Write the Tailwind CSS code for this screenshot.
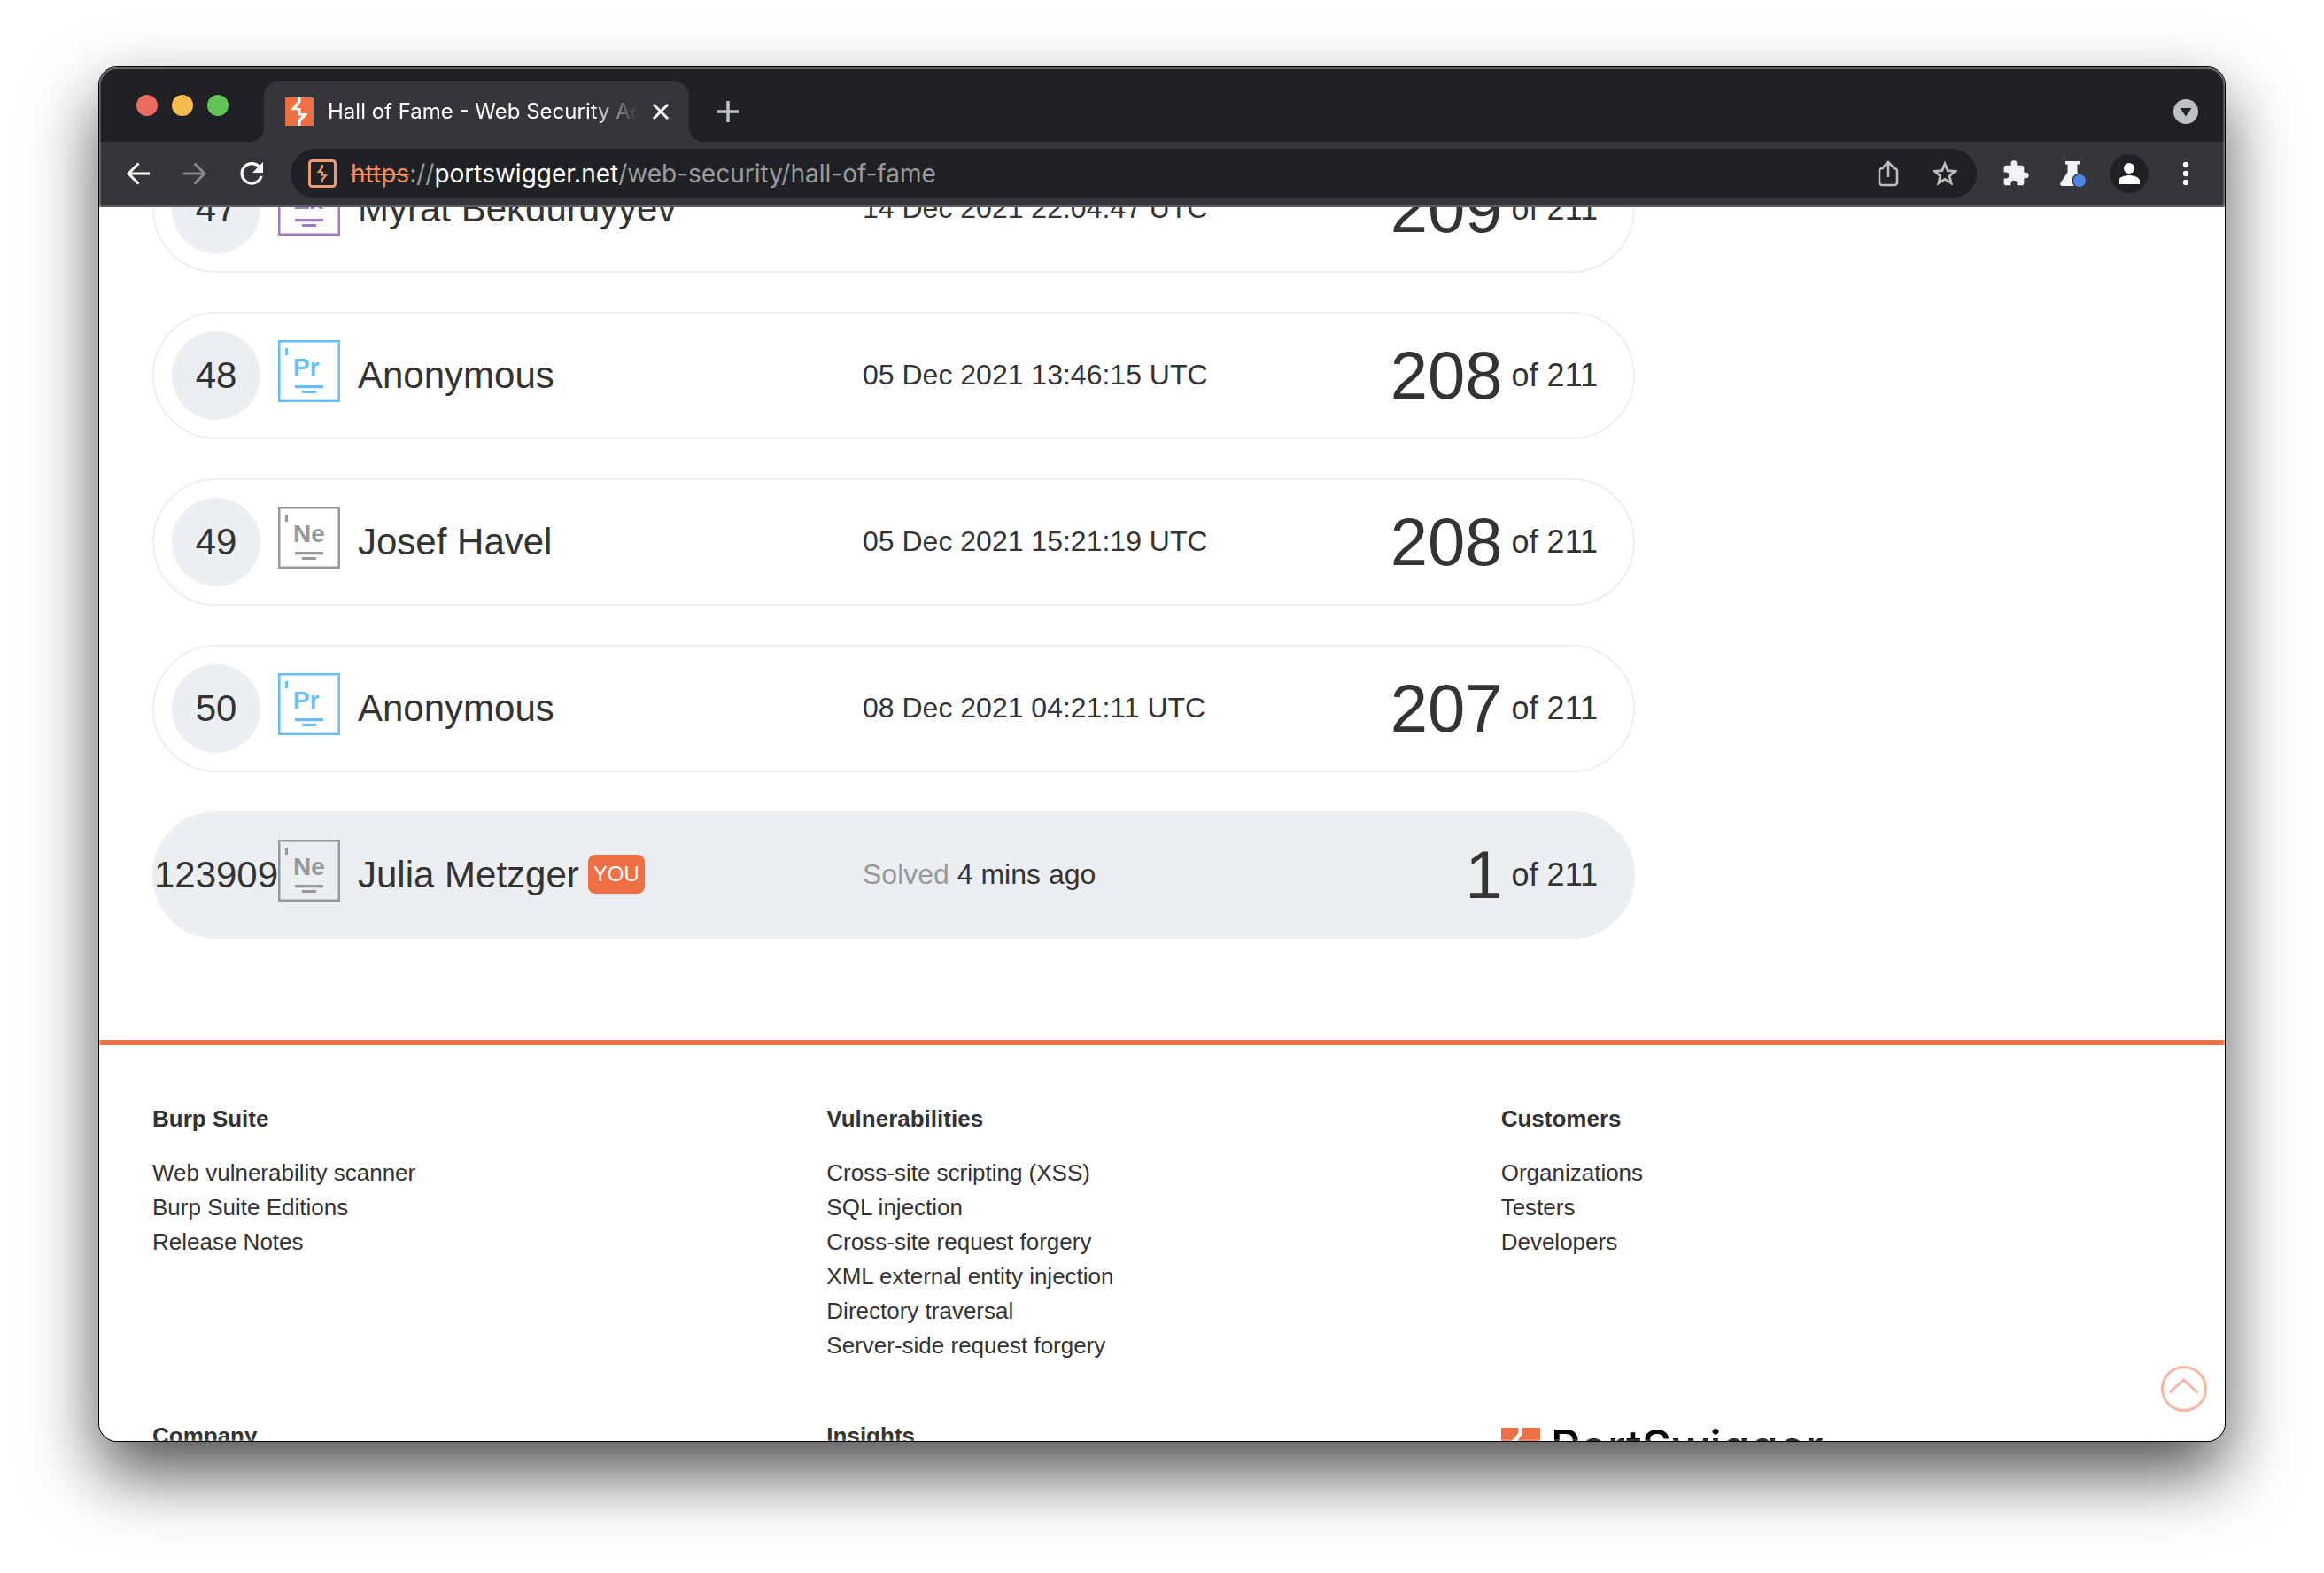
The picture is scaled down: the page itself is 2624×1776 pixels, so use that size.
<!DOCTYPE html>
<html lang="en">
<head>
<meta charset="utf-8">
<title>Hall of Fame - Web Security Academy</title>
<script src="https://cdn.jsdelivr.net/npm/@tailwindcss/browser@4"></script>
</head>
<body class="bg-white">
<svg class="hidden" aria-hidden="true">
  <symbol id="bolt" viewBox="0 0 32 32"><path d="M14 0h3.500v5L12.500 12h5v6h8.200l-8.200 9.500V32H14v-6l5-5.500h-5v-6.200H6l8-9.800z"/></symbol>
  <symbol id="badge-frame" viewBox="0 0 70 70">
    <rect x="1.250" y="1.250" width="67.500" height="67.500" fill="none" stroke="currentColor" stroke-width="2.500"/>
    <path d="M8 9h3v8H8zM19 51h32v3.200H19zM27 57h16v3H27z" fill="currentColor"/>
  </symbol>
</svg>

<div class="flex h-screen flex-col px-28 pt-19 pb-[149px] font-['Liberation_Sans',Arial,sans-serif] text-[#333332]">
  <div class="relative flex min-h-0 flex-1 flex-col overflow-hidden rounded-[20px] bg-white shadow-[0_0_0_1px_#000,0_36px_78px_rgba(0,0,0,0.69)]">

    <!-- Tab strip -->
    <header class="shrink-0 bg-[#202124] font-[Inter,Roboto,sans-serif]">
      <div class="flex h-21 items-end pr-[30px]">
        <div class="flex gap-4 self-center pt-0.5 pl-[42px]">
          <button type="button" aria-label="Close window" class="size-6 rounded-full bg-[#ed6a5f]"></button>
          <button type="button" aria-label="Minimise window" class="size-6 rounded-full bg-[#f5bd4f]"></button>
          <button type="button" aria-label="Zoom window" class="size-6 rounded-full bg-[#61c454]"></button>
        </div>
        <svg class="ml-6 size-4 fill-[#35363a]" viewBox="0 0 16 16" aria-hidden="true"><path d="M16 0v16H0A16 16 0 0 0 16 0z"/></svg>
        <div class="flex h-17 w-[480px] items-center rounded-t-2xl bg-[#35363a] pr-[18px] pl-6">
          <svg class="size-8 shrink-0 bg-[#ee6f43] fill-white" aria-hidden="true"><use href="#bolt"/></svg>
          <span class="ml-4 flex-1 overflow-hidden text-[24px] leading-8 whitespace-nowrap text-white [mask-image:linear-gradient(to_right,#000_85%,transparent)]">Hall of Fame - Web Security Academy</span>
          <button type="button" aria-label="Close tab" class="ml-3 shrink-0">
            <svg class="size-7" viewBox="0 0 28 28" fill="none" stroke="#fff" stroke-width="3"><path d="M6 6l16 16M22 6L6 22"/></svg>
          </button>
        </div>
        <svg class="size-4 fill-[#35363a]" viewBox="0 0 16 16" aria-hidden="true"><path d="M0 0v16h16A16 16 0 0 1 0 0z"/></svg>
        <button type="button" aria-label="New tab" class="mb-5 ml-3.5">
          <svg class="size-7" viewBox="0 0 28 28" fill="none" stroke="#bdc1c6" stroke-width="3.500"><path d="M14 2v24M2 14h24"/></svg>
        </button>
        <button type="button" aria-label="Search tabs" class="mb-5 ml-auto">
          <svg class="size-7" viewBox="0 0 28 28"><circle cx="14" cy="14" r="14" fill="#bdc1c6"/><path d="M7.500 10h13L14 19.500z" fill="#202124"/></svg>
        </button>
      </div>

      <!-- Toolbar -->
      <div class="flex h-[74px] items-center border-b-2 border-[#5c5d61] bg-[#35363a] pr-[30px] pl-7">
        <button type="button" aria-label="Back" class="shrink-0">
          <svg class="size-8" viewBox="0 0 32 32" fill="none" stroke="#fff" stroke-width="3"><path d="M16.500 4.500L5 16l11.500 11.500M5 16h24"/></svg>
        </button>
        <button type="button" aria-label="Forward" class="ml-8 shrink-0">
          <svg class="size-8" viewBox="0 0 32 32" fill="none" stroke="#87888a" stroke-width="3"><path d="M15.500 4.500L27 16 15.500 27.500M27 16H3"/></svg>
        </button>
        <button type="button" aria-label="Reload" class="ml-8 shrink-0">
          <svg class="size-8" viewBox="0 0 32 32"><path d="M25.500 9.500A11.200 11.200 0 1 0 27 19" fill="none" stroke="#fff" stroke-width="3.200"/><path d="M29 3v12H17z" fill="#fff"/></svg>
        </button>
        <div class="ml-7 flex h-14 flex-1 items-center rounded-full bg-[#202124] pr-5 pl-5">
          <svg class="size-8 shrink-0" viewBox="0 0 32 32" aria-hidden="true"><rect x="1.500" y="1.500" width="29" height="29" rx="3" fill="none" stroke="#f19a71" stroke-width="3"/><use href="#bolt" x="6" y="6" width="20" height="20" fill="#f19a71"/></svg>
          <div role="textbox" aria-label="Address" class="ml-4 flex-1 text-[28px] leading-8 whitespace-nowrap text-[#9a9b9d]"><span class="text-[#f08d63] line-through">https</span>://<span class="text-white">portswigger.net</span>/web-security/hall-of-fame</div>
          <button type="button" aria-label="Share">
            <svg class="size-8" viewBox="0 0 32 32" fill="none" stroke="#bdbdbd" stroke-width="2.600"><path d="M11 10H9a3 3 0 0 0-3 3v13a3 3 0 0 0 3 3h14a3 3 0 0 0 3-3V13a3 3 0 0 0-3-3h-2M16 20V4M10.500 8.500L16 3l5.500 5.500"/></svg>
          </button>
          <button type="button" aria-label="Bookmark this page" class="ml-8">
            <svg class="size-8" viewBox="0 0 32 32" fill="none" stroke="#bdbdbd" stroke-width="2.800"><path d="M16 5l3.200 7.600 8.200.7-6.200 5.400 1.900 8L16 22.400l-7.100 4.300 1.900-8-6.200-5.400 8.200-.7z"/></svg>
          </button>
        </div>
        <button type="button" aria-label="Extensions" class="ml-7">
          <svg class="size-8" viewBox="0 0 24 24" fill="#f1f3f4"><path d="M20.500 11H19V7c0-1.100-.9-2-2-2h-4V3.500a2.500 2.500 0 0 0-5 0V5H4c-1.100 0-2 .9-2 2v3.800h1.500a2.700 2.700 0 0 1 0 5.400H2V20c0 1.100.9 2 2 2h3.800v-1.500a2.700 2.700 0 0 1 5.400 0V22H17c1.100 0 2-.9 2-2v-4h1.500a2.500 2.500 0 0 0 0-5z"/></svg>
        </button>
        <button type="button" aria-label="Chrome Labs" class="ml-8">
          <svg class="size-8" viewBox="0 0 32 32"><path d="M8 2h16v3.500h-2.500v9L29 26.500c1 1.800 0 3.500-2 3.500H4.500c-2 0-3-1.700-2-3.500l8-12v-9H8z" fill="#f1f3f4"/><circle cx="24" cy="24" r="8.500" fill="#35363a"/><circle cx="24" cy="24" r="7" fill="#4f86ec"/></svg>
        </button>
        <button type="button" aria-label="Profile" class="ml-[26px]">
          <svg class="size-11" viewBox="0 0 44 44"><circle cx="22" cy="22" r="22" fill="#202124"/><circle cx="22" cy="16" r="6" fill="#fff"/><path d="M10 34v-4c0-4 8-6 12-6s12 2 12 6v4z" fill="#fff"/></svg>
        </button>
        <button type="button" aria-label="Menu" class="ml-7">
          <svg class="size-7" viewBox="0 0 28 28" fill="#fff"><circle cx="14" cy="4" r="3.200"/><circle cx="14" cy="14" r="3.200"/><circle cx="14" cy="24" r="3.200"/></svg>
        </button>
      </div>
    </header>

    <!-- Page, scrolled part-way into row 47 -->
    <div class="min-h-0 flex-1 overflow-hidden">
      <main class="-mt-[70px] px-15">
        <table class="block w-full max-w-[1674px]" aria-label="Hall of Fame">
          <tbody class="flex flex-col gap-11">
            <tr class="flex h-36 items-center gap-5 rounded-full border-2 border-[#ebeff2] pr-10 pl-5">
              <td class="flex size-25 shrink-0 items-center justify-center rounded-full bg-[#ebeff2] pb-0.5 text-[42px]">47</td>
              <td class="flex w-[640px] shrink-0 items-center gap-5 pb-0.5 text-[42px]">
                <svg class="-mt-2 size-[70px] shrink-0 text-[#a579bf]" viewBox="0 0 70 70"><use href="#badge-frame"/><text x="17" y="40" font-size="28" font-weight="700" fill="currentColor">Ex</text></svg>Myrat Bekdurdyyev
              </td>
              <td class="flex-1 pb-0.5 text-[32px]">14 Dec 2021 22:04:47 UTC</td>
              <td class="flex items-center gap-[10px] text-[36px]"><span class="text-[76px] leading-none">209</span> of 211</td>
            </tr>
            <tr class="flex h-36 items-center gap-5 rounded-full border-2 border-[#ebeff2] pr-10 pl-5">
              <td class="flex size-25 shrink-0 items-center justify-center rounded-full bg-[#ebeff2] pb-0.5 text-[42px]">48</td>
              <td class="flex w-[640px] shrink-0 items-center gap-5 pb-0.5 text-[42px]">
                <svg class="-mt-2 size-[70px] shrink-0 text-[#67befb]" viewBox="0 0 70 70"><use href="#badge-frame"/><text x="17" y="40" font-size="28" font-weight="700" fill="currentColor">Pr</text></svg>Anonymous
              </td>
              <td class="flex-1 pb-0.5 text-[32px]">05 Dec 2021 13:46:15 UTC</td>
              <td class="flex items-center gap-[10px] text-[36px]"><span class="text-[76px] leading-none">208</span> of 211</td>
            </tr>
            <tr class="flex h-36 items-center gap-5 rounded-full border-2 border-[#ebeff2] pr-10 pl-5">
              <td class="flex size-25 shrink-0 items-center justify-center rounded-full bg-[#ebeff2] pb-0.5 text-[42px]">49</td>
              <td class="flex w-[640px] shrink-0 items-center gap-5 pb-0.5 text-[42px]">
                <svg class="-mt-2 size-[70px] shrink-0 text-[#999997]" viewBox="0 0 70 70"><use href="#badge-frame"/><text x="17" y="40" font-size="28" font-weight="700" fill="currentColor">Ne</text></svg>Josef Havel
              </td>
              <td class="flex-1 pb-0.5 text-[32px]">05 Dec 2021 15:21:19 UTC</td>
              <td class="flex items-center gap-[10px] text-[36px]"><span class="text-[76px] leading-none">208</span> of 211</td>
            </tr>
            <tr class="flex h-36 items-center gap-5 rounded-full border-2 border-[#ebeff2] pr-10 pl-5">
              <td class="flex size-25 shrink-0 items-center justify-center rounded-full bg-[#ebeff2] pb-0.5 text-[42px]">50</td>
              <td class="flex w-[640px] shrink-0 items-center gap-5 pb-0.5 text-[42px]">
                <svg class="-mt-2 size-[70px] shrink-0 text-[#67befb]" viewBox="0 0 70 70"><use href="#badge-frame"/><text x="17" y="40" font-size="28" font-weight="700" fill="currentColor">Pr</text></svg>Anonymous
              </td>
              <td class="flex-1 pb-0.5 text-[32px]">08 Dec 2021 04:21:11 UTC</td>
              <td class="flex items-center gap-[10px] text-[36px]"><span class="text-[76px] leading-none">207</span> of 211</td>
            </tr>
            <tr class="flex h-36 items-center gap-5 rounded-full border-2 border-[#ebeff2] bg-[#ebeff2] pr-10 pl-5">
              <td class="flex size-25 shrink-0 items-center justify-center rounded-full pb-0.5 text-[42px]">123909</td>
              <td class="flex w-[640px] shrink-0 items-center gap-5 pb-0.5 text-[42px]">
                <svg class="-mt-2 size-[70px] shrink-0 text-[#999997]" viewBox="0 0 70 70"><use href="#badge-frame"/><text x="17" y="40" font-size="28" font-weight="700" fill="currentColor">Ne</text></svg>
                <span class="flex items-center gap-[10px]">Julia Metzger <span class="flex h-11 items-center rounded-lg bg-[#ee6f43] px-[6px] text-[24px] text-white">YOU</span></span>
              </td>
              <td class="flex-1 pb-0.5 text-[32px]"><span class="text-[#999997]">Solved</span> 4 mins ago</td>
              <td class="flex items-center gap-[10px] text-[36px]"><span class="text-[76px] leading-none">1</span> of 211</td>
            </tr>
          </tbody>
        </table>
      </main>

      <footer class="mt-[114px] border-t-6 border-[#ee6f43] px-15 pt-16 text-[26px] leading-[39px]">
        <div class="grid grid-cols-3 gap-x-1 gap-y-[63px]">
          <section>
            <h2 class="font-bold">Burp Suite</h2>
            <ul class="mt-[22px]">
              <li><a href="#">Web vulnerability scanner</a></li>
              <li><a href="#">Burp Suite Editions</a></li>
              <li><a href="#">Release Notes</a></li>
            </ul>
          </section>
          <section>
            <h2 class="font-bold">Vulnerabilities</h2>
            <ul class="mt-[22px]">
              <li><a href="#">Cross-site scripting (XSS)</a></li>
              <li><a href="#">SQL injection</a></li>
              <li><a href="#">Cross-site request forgery</a></li>
              <li><a href="#">XML external entity injection</a></li>
              <li><a href="#">Directory traversal</a></li>
              <li><a href="#">Server-side request forgery</a></li>
            </ul>
          </section>
          <section>
            <h2 class="font-bold">Customers</h2>
            <ul class="mt-[22px]">
              <li><a href="#">Organizations</a></li>
              <li><a href="#">Testers</a></li>
              <li><a href="#">Developers</a></li>
            </ul>
          </section>
          <section><h2 class="font-bold">Company</h2></section>
          <section><h2 class="font-bold">Insights</h2></section>
          <a href="#" class="mt-[10px] flex items-start gap-3 font-[Inter,sans-serif] text-[52px] leading-[44px] font-medium text-black">
            <svg class="size-11 bg-[#ee6f43] fill-white" aria-hidden="true"><use href="#bolt"/></svg>PortSwigger
          </a>
        </div>
      </footer>
    </div>

    <a href="#" aria-label="Back to top" class="absolute right-5 bottom-[33px]">
      <svg class="size-[52px]" viewBox="0 0 52 52" fill="none" stroke="#f8b59f" stroke-width="3"><circle cx="26" cy="26" r="24.500"/><path d="M9.500 30.500L25.500 16l16 14.500"/></svg>
    </a>
    <div class="pointer-events-none absolute inset-0 rounded-[20px] shadow-[inset_0_0_0_2px_rgba(255,255,255,0.2),inset_0_1px_0_1px_rgba(255,255,255,0.15)]"></div>
  </div>
</div>
</body>
</html>
